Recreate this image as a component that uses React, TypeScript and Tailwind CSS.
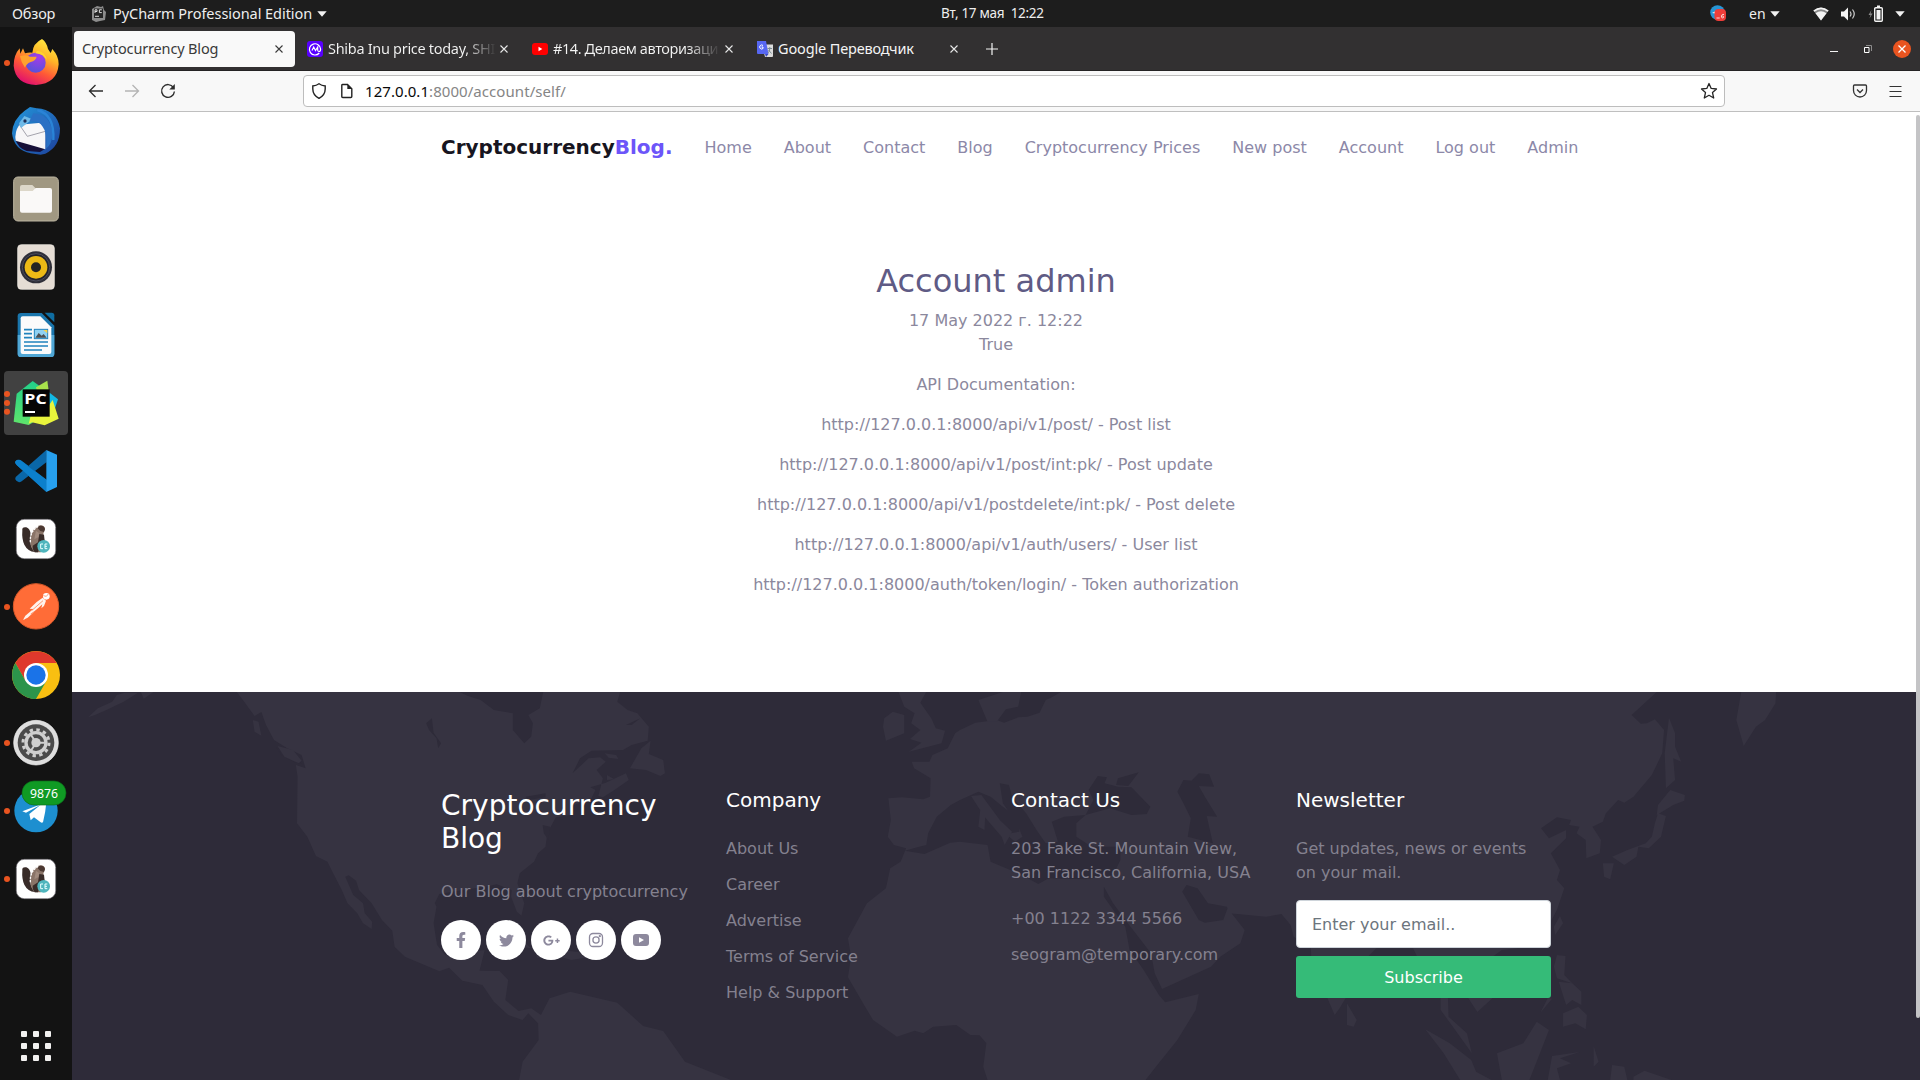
import React from "react";
import { FaFacebookF, FaTwitter, FaGooglePlusG } from "react-icons/fa";

const UI = "font-['Noto_Sans','Open_Sans',sans-serif]";

function Caret() {
  return (
    <svg width="10" height="6" viewBox="0 0 10 6">
      <path d="M0.3 0.3h9.4L5 5.8z" fill="#f2f2f2" />
    </svg>
  );
}

function Close({ dark = false }: { dark?: boolean }) {
  return (
    <svg className="shrink-0" width="8" height="8" viewBox="0 0 8 8">
      <path d="M.5.5l7 7M7.5.5l-7 7" stroke={dark ? "#3a3a3a" : "#e8e8e8"} strokeWidth="1.1" />
    </svg>
  );
}

function TopBar() {
  return (
    <header className={`flex h-[27px] shrink-0 items-center bg-[#1d1d1d] text-[14.5px] text-[#eeeeee] ${UI}`}>
      <span className="ml-[12px] w-[79px] whitespace-nowrap tracking-[-0.2px]">Обзор</span>
      <svg width="15" height="17" viewBox="0 0 15 17">
        <path d="M1 4l5-3 4 1 2-1 1 4 2 2-1 8-5 1-4 1-4-2z" fill="#8d8d8d" />
        <rect x="3" y="3.5" width="9" height="9.5" fill="#262626" />
        <path d="M4 8V4.8h2v1.7H4M10.8 4.8H8.4v2.8h2.4M4 11.3h4" fill="none" stroke="#ddd" />
      </svg>
      <span className="ml-[7px] w-[204px] whitespace-nowrap tracking-[-0.05px]">PyCharm Professional Edition</span>
      <Caret />
      <span className="ml-[614px] w-[769px] whitespace-pre text-[13.5px] tracking-[-0.3px]">Вт, 17 мая  12:22</span>
      <svg width="16" height="17" viewBox="0 0 16 17">
        <circle cx="7.5" cy="7.5" r="7.3" fill="#2795d4" />
        <path d="M2 8l8-4-1 5z" fill="#fff" />
        <rect x="4.5" y="4" width="11.5" height="12" rx="4" fill="#ef3d39" />
        <path d="M6.5 13h3.2M14 9.5c-3-1-3 3.500-1.500 3.500s1.500-2 0-2" stroke="#fbdcd9" fill="none" />
      </svg>
      <span className="ml-[23px] w-[21px] text-[14px]">en</span>
      <Caret />
      <svg className="ml-[33px]" width="16" height="14" viewBox="0 0 16 14">
        <path d="M.4 3.500Q8-2.500 15.600 3.500L8 13.500z" fill="#8a8a8a" />
        <path d="M.4 3.500Q8-2.500 15.600 3.500L14.700 4.700Q8-.3 1.300 4.700z" fill="#f4f4f4" />
        <path d="M2.500 6.300Q8 2 13.500 6.300L8 13.500z" fill="#f4f4f4" />
      </svg>
      <svg className="ml-[12px]" width="15" height="14" viewBox="0 0 15 14">
        <path d="M0 4.500h3L7 .5v13L3 9.500H0z" fill="#f4f4f4" />
        <path d="M9 4.500q2 2.500 0 5M11.500 2.500q3.500 4.500 0 9" fill="none" stroke="#cfcfcf" strokeWidth="1.200" />
      </svg>
      <svg className="ml-[12px]" width="16" height="18" viewBox="0 0 16 18">
        <path d="M3.500 5L.5 10h2L1.500 13.500l3-5h-2z" fill="#8a8a8a" />
        <rect x="6.700" y="2.700" width="7.600" height="13.600" rx="1" fill="none" stroke="#f4f4f4" strokeWidth="1.400" />
        <path d="M9 .5h3v2H9zM8.500 5h4v9.500h-4z" fill="#f4f4f4" />
      </svg>
      <span className="ml-[11px] flex">
        <Caret />
      </span>
    </header>
  );
}

function DockItem({ viewBox, dots = 0, active = false, children }: { viewBox: string; dots?: number; active?: boolean; children: React.ReactNode }) {
  return (
    <div className={active ? "h-16 w-16 rounded-[4px] bg-[#414141]" : "h-16 w-16"}>
      <svg width="64" height="64" viewBox={viewBox} overflow="visible">
        {dots === 1 && <circle cx="21" cy={Number(viewBox.split(" ")[1]) + 96} r="9" fill="#e95420" />}
        {dots === 3 && [102, 129, 155].map((y) => <circle key={y} cx="21" cy={y} r="9" fill="#e95420" />)}
        {children}
      </svg>
    </div>
  );
}

function Beaver() {
  return (
    <>
      <rect x="49" y="478" width="118" height="118" rx="24" fill="#fff" stroke="#77737a" strokeWidth="2" />
      <path d="M67 512q-2-12 12-10 12 4 13 22l-1 22q2 18 14 30-22-2-32-22-8-18-6-42z" fill="#382b28" />
      <path d="M91 545q-1-34 24-48 18-4 20 10l-5 14 3 22-10 34H105q-14-14-14-32z" fill="#8a7468" />
      <path d="M91 547q-2-36 25-48" fill="none" stroke="#fff" strokeWidth="4" strokeDasharray="7 3" />
      <path d="M117 498q14-4 18 9l-3 9-11-3-8-8z" fill="#4b3832" />
      <path d="M118 522l14 2 2 18-14 6-6 29H104q-8-10-6-20l16-10z" fill="#382b28" />
      <path d="M108 512l10 8-3 12-12 6z" fill="#a18b7e" />
      <circle cx="131" cy="559" r="19" fill="#4fb5bd" />
      <path d="M129 552h-7v14h7M142 552h-7v14h7M135 559h6" fill="none" stroke="#e8ffff" strokeWidth="3" />
    </>
  );
}

function Dock() {
  return (
    <aside className="flex w-[72px] shrink-0 flex-col items-center gap-1 bg-[#131313] pt-1">
      <DockItem viewBox="12 33 192 192" dots={1}>
        <defs>
          <linearGradient id="fx" x1=".8" y1="0" x2=".3" y2="1">
            <stop offset="0" stopColor="#fff044" />
            <stop offset=".35" stopColor="#ffb627" />
            <stop offset=".65" stopColor="#ff5a36" />
            <stop offset="1" stopColor="#e00d70" />
          </linearGradient>
          <radialGradient id="fxg" cx=".65" cy=".2" r=".9">
            <stop offset="0" stopColor="#a63be8" />
            <stop offset="1" stopColor="#5154d8" />
          </radialGradient>
        </defs>
        <path d="M126 57q14 10 18 30l8 12 5-12q20 22 19 46-4 58-68 62-62-3-67-58 0-32 18-52l2 16 8-16 6 15q12-4 22-2 2-28 29-41z" fill="url(#fx)" />
        <circle cx="107" cy="128" r="30" fill="url(#fxg)" />
        <path d="M60 108q20-6 30 2h20q-2 12-18 16-14 6-17 17-12-16-15-35z" fill="#ffa22e" />
        <path d="M112 92q26 4 28 28-8-18-34-20z" fill="#ffd22e" />
      </DockItem>
      <DockItem viewBox="12 237 192 192">
        <defs>
          <linearGradient id="tb" x1="0" y1="0" x2="1" y2="1">
            <stop offset="0" stopColor="#2397dc" />
            <stop offset="1" stopColor="#1d3f9a" />
          </linearGradient>
        </defs>
        <path d="M74 272l16-11 20 4q60 4 70 60 0 56-44 76l-14 3-30-4q-50-10-56-60 2-42 38-68z" fill="url(#tb)" />
        <path d="M46 358l90 28-16 10-40-3q-26-8-34-35z" fill="#160f38" />
        <path d="M47 362q-4-26 11-48l66-6 12 12v68z" fill="#f7f6f8" />
        <path d="M58 314l24 35 54-15" fill="none" stroke="#92909c" strokeWidth="2.500" />
        <path d="M57 310l16-22 24 10-34 26z" fill="#6eb9e8" />
        <circle cx="75" cy="303" r="5" fill="#1b2e58" />
        <path d="M100 280q50 2 58 60-2 34-20 46 4-50-10-66-10-18-40-16z" fill="#2a70c4" />
        <path d="M112 270q52 14 48 90" fill="none" stroke="#2a83d6" strokeWidth="7" />
      </DockItem>
      <DockItem viewBox="12 441 192 192">
        <rect x="41" y="471" width="134" height="132" rx="13" fill="#a09882" stroke="#bdb6a2" strokeWidth="3" />
        <path d="M60 501q0-6 6-6h31l9 9v20H60z" fill="#dcd7c9" />
        <path d="M60 513h38l9-9h43q6 0 6 6v62q0 6-6 6H66q-6 0-6-6z" fill="#faf9f8" />
      </DockItem>
      <DockItem viewBox="12 645 192 192">
        <rect x="53" y="674" width="110" height="134" rx="11" fill="#e5ddd4" stroke="#f5f0ea" strokeWidth="2" />
        <circle cx="108" cy="742" r="48" fill="#2f2f39" />
        <circle cx="108" cy="742" r="41" fill="#23232b" stroke="#4c4d5c" strokeWidth="3" />
        <circle cx="108" cy="742" r="34" fill="#ecb916" />
        <circle cx="108" cy="742" r="15" fill="#232323" />
      </DockItem>
      <DockItem viewBox="12 849 192 192">
        <path d="M53 889q0-10 10-10h62l38 38v84q0 10-10 10H63q-10 0-10-10z" fill="#1a76ad" />
        <path d="M53 945h110v56q0 10-10 10H63q-10 0-10-10z" fill="#50a7d5" />
        <path d="M134 878h21q8 0 8 8v21z" fill="#0f6da1" />
        <path d="M62 895q0-6 6-6h53l33 33v74q0 6-6 6H68q-6 0-6-6z" fill="#fbfbfb" />
        <path d="M72 929h24M72 941h24M72 953h24M72 966h72M72 978h72M72 990h54" stroke="#2183bd" strokeWidth="5" />
        <rect x="103" y="928" width="40" height="28" fill="#8fd1f3" stroke="#2183bd" strokeWidth="3" />
        <path d="M106 953l10-14 9 8 6-5 9 11z" fill="#4c5054" />
        <path d="M130 930h12v10z" fill="#f8d14a" />
      </DockItem>
      <DockItem viewBox="12 33 192 192" dots={3} active>
        <defs>
          <linearGradient id="pg" x1="0" y1="0" x2="0" y2="1">
            <stop offset="0" stopColor="#21d08a" />
            <stop offset="1" stopColor="#5fe46b" />
          </linearGradient>
        </defs>
        <path d="M41 185l9-84 48-38 30 22-18 96-24 14z" fill="url(#pg)" />
        <path d="M108 82l34-20 4 30-30 20z" fill="#a8e24c" />
        <path d="M146 96l28 22-14 42-20-10z" fill="#12b9e4" />
        <path d="M92 168l56-34 10-14 18 56-42 20-38-9-10 4z" fill="#e9f53c" />
        <rect x="68" y="88" width="81" height="82" fill="#060606" />
        <text x="73" y="131" className="font-['Open_Sans',sans-serif] font-bold" fontSize="44" textLength="67" lengthAdjust="spacingAndGlyphs" fill="#fff">PC</text>
        <rect x="75" y="153" width="30" height="6" fill="#fff" />
      </DockItem>
      <DockItem viewBox="12 237 192 192">
        <path d="M139 396L50 315q-8-7-3-12l10-4q4 0 8 3l75 57z" fill="#0b7dc8" />
        <path d="M139 270L47 351q-4 6 2 11l8 5q4 0 8-3l75-58z" fill="#0a67a8" />
        <path d="M47 303q4-6 12-3l81 61v35L50 315q-6-6-3-12z" fill="#0c80cc" />
        <path d="M139 270l32 14v97l-32 15z" fill="#27a0ee" />
      </DockItem>
      <DockItem viewBox="12 441 192 192">
        <Beaver />
      </DockItem>
      <DockItem viewBox="12 645 192 192" dots={1}>
        <circle cx="108" cy="739" r="68" fill="#ff6c37" stroke="#d85929" strokeWidth="3" />
        <circle cx="139" cy="709" r="10" fill="#fff" />
        <path d="M139 709l-9-2M139 709l6-7" stroke="#ff6c37" strokeWidth="2" />
        <path d="M128 713l10 9-6 16-8 7 3-12-26 24-18 16-14 7 7-13 24-20-11-1 21-20z" fill="#fff3ed" />
        <path d="M129 722l-33 29M122 742l-30 20" stroke="#ff6c37" strokeWidth="2" />
      </DockItem>
      <DockItem viewBox="12 849 192 192">
        <circle cx="108" cy="945" r="72" fill="#f9bf11" />
        <path d="M46 909A72 72 0 0 1 170 909H108L77 963z" fill="#df382c" />
        <path d="M46 909A72 72 0 0 0 108 1017L139 963 77 963z" fill="#2c944b" />
        <circle cx="108" cy="945" r="36" fill="#fff" />
        <circle cx="108" cy="945" r="29" fill="#1a73e8" />
      </DockItem>
      <DockItem viewBox="12 33 192 192" dots={1}>
        <circle cx="108" cy="128" r="67" fill="#dedede" stroke="#f1f1f1" strokeWidth="2" />
        <circle cx="108" cy="128" r="55" fill="#4b4b4b" />
        <circle cx="108" cy="128" r="39" fill="none" stroke="#cfcfcf" strokeWidth="9" strokeDasharray="10.200 10.200" />
        <circle cx="108" cy="128" r="30" fill="none" stroke="#cfcfcf" strokeWidth="10" />
        <circle cx="108" cy="128" r="14" fill="#cfcfcf" />
        <path d="M108 128l-17-27M108 128l-17 27M108 128h30" stroke="#cfcfcf" strokeWidth="6" />
      </DockItem>
      <DockItem viewBox="12 237 192 192" dots={1}>
        <circle cx="108" cy="332" r="65" fill="#1d8fd0" />
        <path d="M67 334l72-27q-2 28-10 60-4 2-7 0l-20-15-10 9-4-19 34-28-44 24z" fill="#fff" />
        <rect x="66" y="243" width="132" height="72" rx="36" fill="#109a24" stroke="#0b6e18" strokeWidth="2" />
        <text x="132" y="293" textAnchor="middle" className="font-['Noto_Sans',sans-serif]" fontSize="38" textLength="84" lengthAdjust="spacingAndGlyphs" fill="#fff">9876</text>
      </DockItem>
      <DockItem viewBox="12 441 192 192" dots={1}>
        <Beaver />
      </DockItem>
      <div className="mt-auto mb-[19px] grid grid-cols-3 gap-[6px]">
        {[0, 1, 2, 3, 4, 5, 6, 7, 8].map((i) => (
          <span key={i} className="h-[6px] w-[6px] rounded-[1px] bg-[#f2f1f0]" />
        ))}
      </div>
    </aside>
  );
}

function TabStrip() {
  return (
    <div className={`flex h-[44px] shrink-0 items-center border-b border-[#252324] bg-[#323031] text-[14.5px] text-[#f4f4f4] ${UI}`}>
      <div className="ml-[2px] flex h-9 w-[221px] items-center justify-between rounded-[4px] bg-[#f9f9f9] pr-3 pl-2 text-[#3a3a3a]">
        <span className="pt-px whitespace-nowrap tracking-[-0.15px]">Cryptocurrency Blog</span>
        <Close dark />
      </div>
      <svg className="ml-3 shrink-0" width="16" height="16" viewBox="0 0 16 16">
        <rect width="16" height="16" rx="3" fill="#5800ff" />
        <path d="M12.300 12A5.600 5.600 0 1 1 13.600 8q0 2.500-1.500 2.500T10.700 8.500V6L8.500 9.500 6.700 6 5 9.500" fill="none" stroke="#fff" strokeWidth="1.200" />
      </svg>
      <span className="ml-[5px] w-[172px] bg-linear-to-r from-[#f4f4f4] from-80% to-[#323031] to-98% bg-clip-text pt-px whitespace-nowrap tracking-[-0.3px] text-transparent">Shiba Inu price today, SHI</span>
      <Close />
      <svg className="ml-6 shrink-0" width="16" height="16" viewBox="0 0 16 16">
        <rect y="2" width="16" height="12" rx="3" fill="#f00" />
        <path d="M6.500 5.700v4.600L10.300 8z" fill="#fff" />
      </svg>
      <span className="ml-[5px] w-[168px] bg-linear-to-r from-[#f4f4f4] from-80% to-[#323031] to-100% bg-clip-text pt-px whitespace-nowrap tracking-[-0.4px] text-transparent">#14. Делаем авторизаци</span>
      <span className="ml-[4px] flex">
        <Close />
      </span>
      <svg className="ml-6 shrink-0" width="16" height="16" viewBox="0 0 16 16">
        <path d="M5 3.500h11V15q0 1-1 1H8z" fill="#dcdcdc" />
        <path d="M0 0h9l2.500 13H1q-1 0-1-1z" fill="#5767f2" />
        <path d="M11.500 13H8l1 3z" fill="#3a48c0" />
        <path d="M6 4.500A2 2 0 1 0 6 7.500V6H4.500" fill="none" stroke="#fff" />
        <path d="M10.500 7.500H15M12.800 6v1.500q0 3-2 4.500M11.500 9l3 3.500" fill="none" stroke="#7c8c94" />
      </svg>
      <span className="ml-[5px] w-[172px] pt-px whitespace-nowrap tracking-[-0.15px]">Google Переводчик</span>
      <Close />
      <svg className="ml-[28px] shrink-0" width="12" height="12" viewBox="0 0 12 12">
        <path d="M6 0v12M0 6h12" stroke="#f4f4f4" strokeWidth="1.200" />
      </svg>
      <svg className="ml-auto shrink-0" width="8" height="8" viewBox="0 0 8 8">
        <path d="M0 6.500h8" stroke="#f4f4f4" />
      </svg>
      <svg className="ml-[26px] shrink-0" width="8" height="8" viewBox="0 0 8 8">
        <path d="M2 .5h5.500V6" fill="none" stroke="#8d8c8c" />
        <path d="M.5 2.500h4.500v5H.5z" fill="none" stroke="#fff" />
      </svg>
      <svg className="mr-[9px] ml-[21px] shrink-0" width="18" height="18" viewBox="0 0 18 18">
        <circle cx="9" cy="9" r="9" fill="#e95420" />
        <path d="M5.500 5.500l7 7M12.500 5.500l-7 7" stroke="#fff" strokeWidth="1.300" />
      </svg>
    </div>
  );
}

function NavBar() {
  return (
    <div className={`flex h-[41px] shrink-0 items-center border-b border-[#bfbfbf] bg-[#f8f8f8] text-[15px] ${UI}`}>
      <svg className="ml-4" width="16" height="16" viewBox="0 0 16 16">
        <path d="M7.500 2L1.500 8l6 6M1.500 8H15" fill="none" stroke="#2c2c2c" strokeWidth="1.300" />
      </svg>
      <svg className="ml-5" width="16" height="16" viewBox="0 0 16 16">
        <path d="M8.500 2l6 6-6 6M14.500 8H1" fill="none" stroke="#b4b4b4" strokeWidth="1.300" />
      </svg>
      <svg className="ml-5" width="16" height="16" viewBox="0 0 16 16">
        <path d="M13.400 4.500A6.400 6.400 0 1 0 14.400 8.500" fill="none" stroke="#2c2c2c" strokeWidth="1.400" />
        <path d="M14.800 1v5.500H9.300z" fill="#2c2c2c" />
      </svg>
      <div className="ml-[127px] flex h-8 w-[1422px] items-center rounded-[4px] border border-[#bdbdbd] bg-white">
        <svg className="ml-[7px]" width="16" height="16" viewBox="0 0 16 16">
          <path d="M8 .8q2.500 1.900 6.200 2.200v3q0 6-6.200 9.400Q1.800 12 1.800 6V3Q5.500 2.700 8 .8z" fill="none" stroke="#222" strokeWidth="1.400" />
        </svg>
        <svg className="ml-3" width="16" height="16" viewBox="0 0 16 16">
          <path d="M3.500 1.500h5l4.300 4.300v7.700q0 1-1 1h-8q-1 0-1-1v-11q0-1 .7-1z" fill="none" stroke="#222" strokeWidth="1.400" />
          <path d="M8.300 1.200V6h4.700z" fill="#222" />
        </svg>
        <span className="ml-[10px] tracking-[0.06px] text-[#858585]">
          <span className="text-[#080808]">127.0.0.1</span>:8000/account/self/
        </span>
        <svg className="mr-[6px] ml-auto" width="18" height="18" viewBox="0 0 18 18">
          <path d="M9 1.500l2.200 4.900 5.300.6-4 3.600 1.200 5.400L9 13.300 4.300 16l1.200-5.400L1.500 7l5.300-.6z" fill="none" stroke="#262626" strokeWidth="1.300" strokeLinejoin="round" />
        </svg>
      </div>
      <svg className="ml-auto" width="16" height="16" viewBox="0 0 16 16">
        <path d="M2.500 2h11q1 0 1 1v4.500a6.500 6.500 0 0 1-13 0V3q0-1 1-1z" fill="none" stroke="#333" strokeWidth="1.300" />
        <path d="M5 6.500l3 3 3-3" fill="none" stroke="#333" strokeWidth="1.300" />
      </svg>
      <svg className="mr-[17px] ml-[21px]" width="14" height="12" viewBox="0 0 14 12">
        <path d="M.5 1.500h12M.5 6.500h12M.5 11.500h12" stroke="#333" />
      </svg>
    </div>
  );
}

const LAND = "#363341";
const SEA = "#2e2b39";

function WorldMap() {
  return (
    <svg className="absolute inset-0" width="1848" height="388" viewBox="0 0 1848 388">
      <g transform="translate(0 -2) scale(.57398 .33333)">
        <path
          fill={LAND}
          d="M287 6L300 35 318 78 330 66 338 105 352 150 375 175 400 195 407 235 390 225 393 260 392 400 410 440 425 498 445 515 455 550 470 600 480 640 497 670 507 700 522 717 523 695 510 670 507 640 490 615 476 560 482 556 495 572 500 600 522 640 540 690 558 722 562 770 580 800 640 844 657 833 680 872 715 885 735 935 760 975 785 990 795 970 812 1000 813 1050 785 1115 779 1170H1148L1068 1115 1030 1023 995 1008 950 938 868 905 832 925 817 975 800 955 778 963 755 930 760 870 745 843 710 842 719 780 690 785 688 800 650 795 636 765 630 700 635 650 632 640 640 612 680 600 720 590 740 583 766 600 765 620 775 665 783 677 788 640 776 580 780 550 805 515 812 490 825 470 828 430 843 382 868 375 875 345 905 325 912 300 903 292 930 278 965 250 970 270 945 300 925 322 917 318 925 265 914 240 930 215 920 202 900 205 872 250 885 205 905 182 960 180 975 165 1003 152 1005 110 985 70 968 60 950 35 955 6Z"
        />
        <path
          fill={SEA}
          d="M675 6L690 18 712 30 735 60 768 70 768 120 788 160 800 140 803 100 795 75 815 55 821 6ZM627 85L617 100 622 120 635 145 638 175 643 160 630 128ZM355 170L370 185 400 222 385 215 365 195ZM790 320L825 310 825 322 795 330ZM965 105L990 85 975 105ZM820 405L833 410 830 450 822 430Z"
        />
        <path
          fill={LAND}
          d="M28 82L45 55 70 35 78 15 92 8H115L90 35 60 60 40 75ZM120 6L125 26 142 6ZM315 90L325 95 330 137 318 125ZM358 168L385 180 400 212 395 220 370 200ZM1008 152L992 175 972 235 1000 240 1025 258 1033 250 1030 210 1005 192ZM928 190L948 195 952 207 935 203ZM932 255L945 268 932 270ZM722 745L750 740 790 760 800 775 760 765ZM808 790L850 780 903 790 905 800 870 810 850 800 810 803ZM1440 6H1488L1478 38 1497 85 1505 115 1521 122 1515 160 1458 185 1480 158 1460 147 1478 120 1462 100 1468 70 1450 50ZM1430 65L1450 75 1450 130 1418 152 1413 110 1415 85Z"
        />
      </g>
      <g transform="translate(888 -2) scale(.61224 .33333)">
        <path
          fill={LAND}
          d="M165 6H1138L1097 75 1112 101 1122 100 1135 88 1150 120 1147 190 1130 255 1100 320 1085 338 1075 330 1055 370 1050 395 1033 410 1047 450 1045 490 1023 505 1022 450 1007 430 1012 410 995 405 998 390 975 382 949 415 962 445 990 420 990 445 965 490 980 540 975 570 987 595 975 660 960 710 958 740 910 775 885 780 870 800 870 924 845 966 830 924H797L798 980 828 1030 836 1090 805 1010 785 960 785 924 760 850 740 775H680L640 850 630 924 620 955 612 975 600 924 575 850 573 775 545 740 540 705 525 672 500 680 440 670 436 650 405 640 388 595 370 585 363 605 390 690 400 698 430 690 437 655 465 720 458 760 425 800 410 830 330 897 318 850 312 790 270 690 250 640 235 590 235 620 270 710 277 780 300 840 325 915 335 937 390 912 385 960 355 1050 320 1130 303 1170H45L38 1130 43 1060 32 1036 17 1035-6 1005-44 1010-60 1030-74 1022-103 1040-142 990-155 950-183 862-178 800-183 745-152 640-121 595-114 535-97 515-88 475-108 465-118 440-113 390-117 325-95 322-60 328-49 320-48 265-75 235-79 215-50 215-45 195-20 175-8 130 0 120 25 98 60 90 72 98 95 82 110 80 130 68 140 30 150 22Z"
        />
        <path
          fill={SEA}
          d="M-90 482L-70 472-55 465-52 430-38 380-15 345 0 330 30 305 50 320 70 350 95 385 97 425 75 432 90 455 102 440 93 400 70 340 65 280 80 285 85 320 108 370 125 420 140 460 160 455 150 395 170 380 205 375 190 400 190 440 215 470 262 470 262 510 250 555 205 568 145 565 128 582 95 550 50 515 45 465 0 455-16 458-58 492ZM205 375L218 330 210 300 225 258 240 262 236 280 258 290 280 292 311 350 305 372 280 375 245 355ZM255 285L258 265 292 247 275 288ZM355 305L365 270 378 272 390 250 407 253 415 290 390 288 400 320 420 380 403 378 413 460 372 440 377 385 365 340Z"
        />
        <path
          fill={LAND}
          d="M18 318L35 315 65 390 85 425 73 465 68 440 40 380ZM33 360L42 350 40 420 30 410ZM30 30L70 6H100L95 50 75 58 60 95 45 95ZM1158 83L1168 130 1168 170 1178 215 1165 205 1168 270 1153 295 1151 190ZM1160 300L1184 315 1183 332 1165 345 1138 375 1140 345ZM1140 370L1153 378 1145 440 1125 475 1108 470 1105 500 1085 525 1065 500 1090 480 1120 460 1130 440 1135 400ZM1050 520L1068 520 1062 568 1052 560ZM1276 6H1333L1332 40 1315 90 1300 110 1280 168 1268 90ZM980 678L985 700 972 735 970 710ZM975 795L989 798 987 855 1000 880 975 865 970 830ZM978 875L1000 880 1015 905 1015 945 1000 930 990 945ZM985 970L1010 950 1024 975 1022 1018 1005 1000 985 1010ZM960 924L967 926 948 968ZM632 940L648 990 643 1010 632 1005ZM942 995L962 1020 945 1100 930 1170H885L877 1090 920 1060ZM760 1018L800 1060 835 1110 843 1145 868 1170H817L790 1090ZM967 1098L1012 1086 980 1105 998 1120 975 1135 980 1170H960ZM1035 1068L1043 1115 1035 1130ZM1065 1125L1085 1130 1090 1170H1062ZM1100 1160L1118 1142 1162 1170H1100Z"
        />
      </g>
    </svg>
  );
}

const links = ["Home", "About", "Contact", "Blog", "Cryptocurrency Prices", "New post", "Account", "Log out", "Admin"];
const docs = [
  "API Documentation:",
  "http://127.0.0.1:8000/api/v1/post/ - Post list",
  "http://127.0.0.1:8000/api/v1/post/int:pk/ - Post update",
  "http://127.0.0.1:8000/api/v1/postdelete/int:pk/ - Post delete",
  "http://127.0.0.1:8000/api/v1/auth/users/ - User list",
  "http://127.0.0.1:8000/auth/token/login/ - Token authorization",
];

const socials = [
  <FaFacebookF key="f" size={16} />,
  <FaTwitter key="t" size={15} />,
  <FaGooglePlusG key="g" size={17} />,
  <svg key="i" width="16" height="16" viewBox="0 0 16 16" fill="none" stroke="currentColor" strokeWidth="1.300">
    <rect x="1.500" y="1.500" width="13" height="13" rx="3.500" />
    <circle cx="8" cy="8" r="3.100" />
    <circle cx="11.800" cy="4.200" r=".5" />
  </svg>,
  <svg key="y" width="16" height="12" viewBox="0 0 16 12">
    <path fill="currentColor" fillRule="evenodd" d="M3 0h10q3 0 3 3v6q0 3-3 3H3q-3 0-3-3V3q0-3 3-3zM6 3.200v5.600L11 6z" />
  </svg>,
];

function Footer() {
  return (
    <footer className="relative h-[388px] shrink-0 overflow-hidden bg-[#2e2b39] text-[#84818f]">
      <WorldMap />
      <div className="relative mx-auto grid w-[1140px] grid-cols-4 pt-24 leading-6">
        <section className="px-[15px]">
          <h2 className="mt-px mb-[25px] text-[28px] leading-[33px] text-white">Cryptocurrency Blog</h2>
          <p className="mb-4 whitespace-nowrap">Our Blog about cryptocurrency</p>
          <div className="flex gap-[5px]">
            {socials.map((icon, i) => (
              <a key={i} className="flex h-10 w-10 items-center justify-center rounded-full bg-white text-[#8d899d]">
                {icon}
              </a>
            ))}
          </div>
        </section>
        <section className="px-[15px]">
          <h3 className="mb-[25px] text-xl leading-6 text-white">Company</h3>
          <ul className="flex flex-col gap-3">
            {["About Us", "Career", "Advertise", "Terms of Service", "Help & Support"].map((t) => (
              <li key={t}>{t}</li>
            ))}
          </ul>
        </section>
        <section className="px-[15px]">
          <h3 className="mb-[25px] text-xl leading-6 text-white">Contact Us</h3>
          <p className="whitespace-nowrap">
            203 Fake St. Mountain View,
            <br />
            San Francisco, California, USA
          </p>
          <p className="mt-[22px]">+00 1122 3344 5566</p>
          <p className="mt-3">seogram@temporary.com</p>
        </section>
        <section className="px-[15px]">
          <h3 className="mb-[25px] text-xl leading-6 text-white">Newsletter</h3>
          <p>Get updates, news or events on your mail.</p>
          <div className="mt-[15px] flex h-12 items-center rounded-[4px] border border-[#ced4da] bg-white px-[15px] pt-[2px] text-[#6c757d]">Enter your email..</div>
          <button className="mt-2 block h-[42px] w-full rounded-[3px] bg-[#35bb78] pt-[2px] text-white">Subscribe</button>
        </section>
      </div>
    </footer>
  );
}

function Page() {
  return (
    <main className="relative flex h-[968px] flex-col bg-white font-['DejaVu_Sans',sans-serif] text-[16px]">
      <nav className="mx-auto flex h-[70px] w-[1140px] items-center px-[15px]">
        <a className="mr-4 text-xl font-bold whitespace-nowrap text-[#171520]">
          Cryptocurrency<span className="text-[#6c55f9]">Blog.</span>
        </a>
        {links.map((l) => (
          <a key={l} className="px-4 pt-[2px] whitespace-nowrap text-[#8c88a8]">
            {l}
          </a>
        ))}
      </nav>
      <section className="flex flex-1 flex-col items-center pt-[79.6px] leading-6 text-[#8b889d]">
        <h1 className="mb-[9px] text-[32px] leading-[38.4px] text-[#5f5b85]">Account admin</h1>
        <p className="text-center">
          17 May 2022 г. 12:22
          <br />
          True
        </p>
        {docs.map((d) => (
          <p key={d} className="mt-4">
            {d}
          </p>
        ))}
      </section>
      <Footer />
      <div className="absolute top-[3px] right-0 h-[903px] w-[4px] rounded-full bg-[#c4c4c6]" />
    </main>
  );
}

export default function App() {
  return (
    <div className="flex h-[1080px] w-[1920px] flex-col overflow-hidden">
      <TopBar />
      <div className="flex min-h-0 flex-1">
        <Dock />
        <div className="flex min-w-0 flex-1 flex-col">
          <TabStrip />
          <NavBar />
          <Page />
        </div>
      </div>
    </div>
  );
}
